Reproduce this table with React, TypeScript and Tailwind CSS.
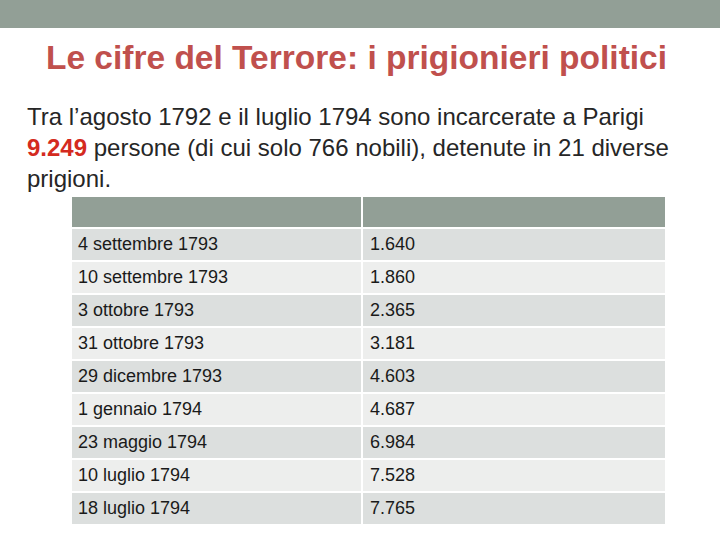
const rows: [string, string][] = [
  ["4 settembre 1793", "1.640"],
  ["10 settembre 1793", "1.860"],
  ["3 ottobre 1793", "2.365"],
  ["31 ottobre 1793", "3.181"],
  ["29 dicembre 1793", "4.603"],
  ["1 gennaio 1794", "4.687"],
  ["23 maggio 1794", "6.984"],
  ["10 luglio 1794", "7.528"],
  ["18 luglio 1794", "7.765"],
];

export default function App() {
  return (
    <div className="w-[720px] h-[540px] bg-white overflow-hidden [font-family:'Liberation_Sans',Arial,sans-serif]">
      <div className="h-[28px] bg-[#929f96]" />
      <h1 className="mt-[8px] pr-[7px] text-center text-[33.5px] leading-[44px] font-bold text-[#c0504d]">
        Le cifre del Terrore: i prigionieri politici
      </h1>
      <p className="mt-[21px] pl-[27px] pr-[40px] text-[24px] leading-[31px] text-[#262626]">
        Tra l’agosto 1792 e il luglio 1794 sono incarcerate a Parigi{" "}
        <span className="font-bold text-[#d42a20]">9.249</span> persone (di cui solo 766 nobili), detenute in 21 diverse
        prigioni.
      </p>
      <div className="mt-[3px] ml-[72px] grid grid-cols-[289px_302px] gap-x-[2px] gap-y-[2px]">
        <div className="h-[30px] bg-[#929f96]" />
        <div className="h-[30px] bg-[#929f96]" />
        {rows.map(([d, n], i) => {
          const bg = i % 2 === 0 ? "bg-[#dcdfde]" : "bg-[#edeeed]";
          return [
            <div key={d} className={`h-[31px] ${bg} flex items-center pl-[6px] text-[18px] text-[#1a1a1a]`}>
              {d}
            </div>,
            <div key={d + n} className={`h-[31px] ${bg} flex items-center pl-[7px] text-[18px] text-[#1a1a1a]`}>
              {n}
            </div>,
          ];
        })}
      </div>
    </div>
  );
}
